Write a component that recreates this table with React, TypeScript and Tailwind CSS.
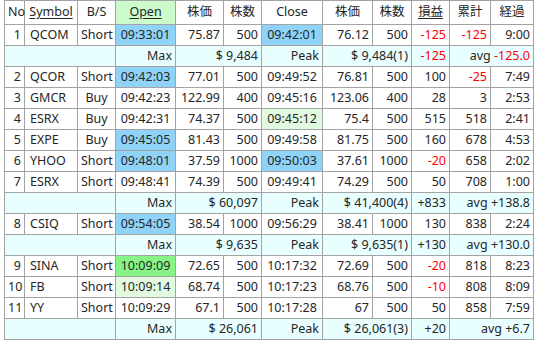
type Hl = "blue" | "green" | "lime" | undefined;

interface Trade {
  no: number;
  symbol: string;
  side: string;
  open: string;
  openHl?: Hl;
  openPrice: string;
  openQty: string;
  close: string;
  closeHl?: Hl;
  closePrice: string;
  closeQty: string;
  pnl: string;
  total: string;
  elapsed: string;
}

interface Summary {
  max: string;
  peak: string;
  pnl: string;
  avg: string;
}

type Row = { kind: "trade"; t: Trade } | { kind: "sum"; s: Summary };

const rows: Row[] = [
  { kind: "trade", t: { no: 1, symbol: "QCOM", side: "Short", open: "09:33:01", openHl: "blue", openPrice: "75.87", openQty: "500", close: "09:42:01", closeHl: "blue", closePrice: "76.12", closeQty: "500", pnl: "-125", total: "-125", elapsed: "9:00" } },
  { kind: "sum", s: { max: "$ 9,484", peak: "$ 9,484(1)", pnl: "-125", avg: "-125.0" } },
  { kind: "trade", t: { no: 2, symbol: "QCOR", side: "Short", open: "09:42:03", openHl: "blue", openPrice: "77.01", openQty: "500", close: "09:49:52", closePrice: "76.81", closeQty: "500", pnl: "100", total: "-25", elapsed: "7:49" } },
  { kind: "trade", t: { no: 3, symbol: "GMCR", side: "Buy", open: "09:42:23", openPrice: "122.99", openQty: "400", close: "09:45:16", closePrice: "123.06", closeQty: "400", pnl: "28", total: "3", elapsed: "2:53" } },
  { kind: "trade", t: { no: 4, symbol: "ESRX", side: "Buy", open: "09:42:31", openPrice: "74.37", openQty: "500", close: "09:45:12", closeHl: "lime", closePrice: "75.4", closeQty: "500", pnl: "515", total: "518", elapsed: "2:41" } },
  { kind: "trade", t: { no: 5, symbol: "EXPE", side: "Buy", open: "09:45:05", openHl: "blue", openPrice: "81.43", openQty: "500", close: "09:49:58", closePrice: "81.75", closeQty: "500", pnl: "160", total: "678", elapsed: "4:53" } },
  { kind: "trade", t: { no: 6, symbol: "YHOO", side: "Short", open: "09:48:01", openHl: "blue", openPrice: "37.59", openQty: "1000", close: "09:50:03", closeHl: "blue", closePrice: "37.61", closeQty: "1000", pnl: "-20", total: "658", elapsed: "2:02" } },
  { kind: "trade", t: { no: 7, symbol: "ESRX", side: "Short", open: "09:48:41", openPrice: "74.39", openQty: "500", close: "09:49:41", closePrice: "74.29", closeQty: "500", pnl: "50", total: "708", elapsed: "1:00" } },
  { kind: "sum", s: { max: "$ 60,097", peak: "$ 41,400(4)", pnl: "+833", avg: "+138.8" } },
  { kind: "trade", t: { no: 8, symbol: "CSIQ", side: "Short", open: "09:54:05", openHl: "blue", openPrice: "38.54", openQty: "1000", close: "09:56:29", closePrice: "38.41", closeQty: "1000", pnl: "130", total: "838", elapsed: "2:24" } },
  { kind: "sum", s: { max: "$ 9,635", peak: "$ 9,635(1)", pnl: "+130", avg: "+130.0" } },
  { kind: "trade", t: { no: 9, symbol: "SINA", side: "Short", open: "10:09:09", openHl: "green", openPrice: "72.65", openQty: "500", close: "10:17:32", closePrice: "72.69", closeQty: "500", pnl: "-20", total: "818", elapsed: "8:23" } },
  { kind: "trade", t: { no: 10, symbol: "FB", side: "Short", open: "10:09:14", openHl: "lime", openPrice: "68.74", openQty: "500", close: "10:17:23", closePrice: "68.76", closeQty: "500", pnl: "-10", total: "808", elapsed: "8:09" } },
  { kind: "trade", t: { no: 11, symbol: "YY", side: "Short", open: "10:09:29", openPrice: "67.1", openQty: "500", close: "10:17:28", closePrice: "67", closeQty: "500", pnl: "50", total: "858", elapsed: "7:59" } },
  { kind: "sum", s: { max: "$ 26,061", peak: "$ 26,061(3)", pnl: "+20", avg: "+6.7" } },
];

const hlClass = (h: Hl) =>
  h === "blue" ? "bg-[#8fd3f8]" : h === "green" ? "bg-[#86f586]" : h === "lime" ? "bg-[#e2fbe0]" : "";

const red = (v: string) => (v.startsWith("-") ? "text-[#ff0000]" : "");

const cell = "border border-[#a3a3a3] px-[3px] whitespace-nowrap";

export default function App() {
  return (
    <div className="bg-white w-[536px] h-[344px] pl-[4px] overflow-hidden">
      <table
        className="table-fixed border-collapse w-[529px] text-[12.5px] leading-none text-[#262626]"
        style={{ fontFamily: '"Noto Sans", "Noto Sans CJK JP", sans-serif' }}
      >
        <colgroup>
          <col className="w-[20px]" />
          <col className="w-[53px]" />
          <col className="w-[38px]" />
          <col className="w-[60px]" />
          <col className="w-[48px]" />
          <col className="w-[38px]" />
          <col className="w-[61px]" />
          <col className="w-[50px]" />
          <col className="w-[39px]" />
          <col className="w-[38px]" />
          <col className="w-[41px]" />
          <col className="w-[43px]" />
        </colgroup>
        <thead>
          <tr className="h-[24px] text-center">
            <th className={`${cell} font-normal`}>No</th>
            <th className={`${cell} font-normal underline underline-offset-2`}>Symbol</th>
            <th className={`${cell} font-normal`}>B/S</th>
            <th className={`${cell} font-normal underline underline-offset-2 bg-[#ccfccc]`}>Open</th>
            <th className={`${cell} font-normal`}>株価</th>
            <th className={`${cell} font-normal`}>株数</th>
            <th className={`${cell} font-normal`}>Close</th>
            <th className={`${cell} font-normal`}>株価</th>
            <th className={`${cell} font-normal`}>株数</th>
            <th className={`${cell} font-normal underline underline-offset-2`}>損益</th>
            <th className={`${cell} font-normal`}>累計</th>
            <th className={`${cell} font-normal`}>経過</th>
          </tr>
        </thead>
        <tbody>
          {rows.map((r, i) =>
            r.kind === "trade" ? (
              <tr key={i} className="h-[21px]">
                <td className={`${cell} text-right`}>{r.t.no}</td>
                <td className={`${cell} text-left pl-[5px]`}>{r.t.symbol}</td>
                <td className={`${cell} text-center`}>{r.t.side}</td>
                <td className={`${cell} text-center ${hlClass(r.t.openHl)}`}>{r.t.open}</td>
                <td className={`${cell} text-right`}>{r.t.openPrice}</td>
                <td className={`${cell} text-right`}>{r.t.openQty}</td>
                <td className={`${cell} text-center ${hlClass(r.t.closeHl)}`}>{r.t.close}</td>
                <td className={`${cell} text-right`}>{r.t.closePrice}</td>
                <td className={`${cell} text-right`}>{r.t.closeQty}</td>
                <td className={`${cell} text-right ${red(r.t.pnl)}`}>{r.t.pnl}</td>
                <td className={`${cell} text-right ${red(r.t.total)}`}>{r.t.total}</td>
                <td className={`${cell} text-right`}>{r.t.elapsed}</td>
              </tr>
            ) : (
              <tr key={i} className="h-[21px] bg-[#e8feff]">
                <td colSpan={3} className={cell}></td>
                <td className={`${cell} text-right`}>Max</td>
                <td colSpan={2} className={`${cell} text-right`}>{r.s.max}</td>
                <td className={`${cell} text-right`}>Peak</td>
                <td colSpan={2} className={`${cell} text-right`}>{r.s.peak}</td>
                <td className={`${cell} text-right ${red(r.s.pnl)}`}>{r.s.pnl}</td>
                <td colSpan={2} className={`${cell} text-right`}>
                  avg <span className={red(r.s.avg)}>{r.s.avg}</span>
                </td>
              </tr>
            )
          )}
        </tbody>
      </table>
    </div>
  );
}
